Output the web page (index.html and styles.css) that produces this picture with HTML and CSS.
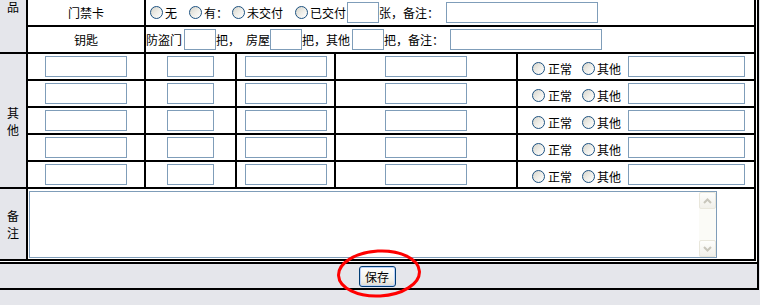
FILE: index.html
```html
<!DOCTYPE html>
<html lang="zh-CN">
<head>
    <meta charset="UTF-8">
    <title>物品交接</title>
    <link rel="stylesheet" href="styles.css">
</head>
<body>
    <div class="frame">
        <div class="main">
            <div class="sheet">
                <!-- 物品 -->
                <div class="side side-top">品</div>
                <div class="label">门禁卡</div>
                <div class="line wide-cell">
                    <input type="radio" name="card" class="radio"><span class="gap">无</span>
                    <input type="radio" name="card" class="radio"><span>有：</span>
                    <input type="radio" name="pay" class="radio"><span class="gap">未交付</span>
                    <input type="radio" name="pay" class="radio"><span>已交付</span>
                    <input class="box tiny ml1"><span>张，备注：</span>
                    <input class="box note ml7">
                </div>
                <div class="label">钥匙</div>
                <div class="line wide-cell">
                    <span>防盗门</span>
                    <input class="box tiny ml2"><span>把，</span>
                    <span class="ml6">房屋</span>
                    <input class="box tiny"><span>把，其他</span>
                    <input class="box tiny ml2"><span>把，备注：</span>
                    <input class="box note ml6">
                </div>

                <!-- 其他 -->
                <div class="side side-other">其<br>他</div>

                <div class="cell"><input class="box mid"></div>
                <div class="cell"><input class="box small"></div>
                <div class="cell"><input class="box mid"></div>
                <div class="cell"><input class="box mid"></div>
                <div class="line status">
                    <input type="radio" name="s1" class="radio"><span>正常</span>
                    <input type="radio" name="s1" class="radio second"><span>其他</span>
                    <input class="box other">
                </div>

                <div class="cell"><input class="box mid"></div>
                <div class="cell"><input class="box small"></div>
                <div class="cell"><input class="box mid"></div>
                <div class="cell"><input class="box mid"></div>
                <div class="line status">
                    <input type="radio" name="s2" class="radio"><span>正常</span>
                    <input type="radio" name="s2" class="radio second"><span>其他</span>
                    <input class="box other">
                </div>

                <div class="cell"><input class="box mid"></div>
                <div class="cell"><input class="box small"></div>
                <div class="cell"><input class="box mid"></div>
                <div class="cell"><input class="box mid"></div>
                <div class="line status">
                    <input type="radio" name="s3" class="radio"><span>正常</span>
                    <input type="radio" name="s3" class="radio second"><span>其他</span>
                    <input class="box other">
                </div>

                <div class="cell"><input class="box mid"></div>
                <div class="cell"><input class="box small"></div>
                <div class="cell"><input class="box mid"></div>
                <div class="cell"><input class="box mid"></div>
                <div class="line status">
                    <input type="radio" name="s4" class="radio"><span>正常</span>
                    <input type="radio" name="s4" class="radio second"><span>其他</span>
                    <input class="box other">
                </div>

                <div class="cell"><input class="box mid"></div>
                <div class="cell"><input class="box small"></div>
                <div class="cell"><input class="box mid"></div>
                <div class="cell"><input class="box mid"></div>
                <div class="line status">
                    <input type="radio" name="s5" class="radio"><span>正常</span>
                    <input type="radio" name="s5" class="radio second"><span>其他</span>
                    <input class="box other">
                </div>

                <!-- 备注 -->
                <div class="side">备<br>注</div>
                <div class="remark">
                    <div class="memo">
                        <textarea></textarea>
                        <div class="bar">
                            <div class="arrow">
                                <svg width="9" height="6" viewBox="0 0 9 6"><polyline points="1,5 4.5,1.5 8,5" fill="none" stroke="#c8c6bb" stroke-width="2"/></svg>
                            </div>
                            <div class="track"></div>
                            <div class="arrow">
                                <svg width="9" height="6" viewBox="0 0 9 6"><polyline points="1,1 4.5,4.5 8,1" fill="none" stroke="#c8c6bb" stroke-width="2"/></svg>
                            </div>
                        </div>
                    </div>
                </div>
            </div>
        </div>
        <div class="actions">
            <button class="save">保存</button>
        </div>
    </div>

    <!-- 红圈标注 -->
    <svg class="mark" width="90" height="54" viewBox="0 0 90 54">
        <ellipse cx="43" cy="25.5" rx="40.5" ry="22.5" fill="none" stroke="#f00" stroke-width="3" transform="rotate(-3 43 25.5)"/>
    </svg>
</body>
</html>
```

FILE: styles.css
```css
body {
    margin: 0;
    background-color: #e5e6eb;
    font-family: "Noto Sans CJK SC", "Liberation Sans", sans-serif;
    font-size: 12px;
    color: #000;
}
.frame {
    width: max-content;
    margin: -5px 0 0 -5px;
    border: 2px solid #000;
}
.main {
    background-color: #fff;
    padding: 1px;
    border-bottom: 2px solid #000;
}
.sheet {
    display: grid;
    grid-template-columns: 26px 116px 89px 97px 180px 236px;
    grid-template-rows: 25px 25px repeat(5, 25px) 70px;
    gap: 2px;
    padding: 2px;
    background-color: #000;
}
.sheet > div {
    background-color: #fff;
}
.side {
    display: flex;
    align-items: center;
    justify-content: center;
    text-align: center;
    line-height: 17px;
    background-color: #e5e6eb !important;
}
.side-top {
    grid-row: span 2;
    align-items: flex-start;
    padding-top: 1px;
    line-height: 12px;
}
.side-other {
    grid-row: span 5;
}
.label {
    display: flex;
    align-items: center;
    justify-content: center;
}
.wide-cell {
    grid-column: span 4;
}
.line {
    display: flex;
    align-items: center;
    white-space: nowrap;
}
.cell {
    display: flex;
    align-items: center;
    justify-content: center;
}
.remark {
    grid-column: span 5;
}

/* 输入框 */
.box {
    box-sizing: border-box;
    height: 21px;
    margin: 0;
    padding: 0 2px;
    border: 1px solid #7f9db9;
    background-color: #fff;
    font: inherit;
}
.tiny { width: 32px; }
.small { width: 47px; }
.mid { width: 82px; }
.note { width: 152px; }
.other { width: 117px; margin-left: 7px; }
.ml1 { margin-left: 1px; }
.ml2 { margin-left: 2px; }
.ml6 { margin-left: 6px; }
.ml7 { margin-left: 7px; }
.gap { margin-right: 8px; }

/* 单选框 (XP风格) */
.radio {
    -webkit-appearance: none;
    appearance: none;
    box-sizing: border-box;
    width: 13px;
    height: 13px;
    margin: 0 2px 0 4px;
    border: 1px solid #1c5180;
    border-radius: 50%;
    background: linear-gradient(135deg, #d6d5cc 0%, #f0efea 55%, #fff 100%);
}
.status .radio {
    margin: 4px 3px 0 14px;
}
.status .radio.second {
    margin-left: 10px;
    margin-right: 2px;
}
.status span {
    margin-top: 4px;
}

/* 备注 */
.memo {
    box-sizing: border-box;
    display: flex;
    width: 688px;
    height: 67px;
    margin: 2px 0 0 1px;
    border: 1px solid #7f9db9;
    background-color: #fff;
}
.memo textarea {
    flex: 1;
    margin: 0;
    border: none;
    outline: none;
    resize: none;
    font: inherit;
}
.bar {
    display: flex;
    flex-direction: column;
    width: 17px;
    background-color: #fbfbf7;
}
.arrow {
    box-sizing: border-box;
    display: flex;
    align-items: center;
    justify-content: center;
    height: 17px;
    border: 1px solid #e9e7dc;
    border-radius: 2px;
    background: linear-gradient(#fefefc, #f1f0ea);
}
.track {
    flex: 1;
}

/* 保存按钮 */
.actions {
    display: flex;
    align-items: center;
    justify-content: center;
    height: 24px;
    background-color: #e5e6eb;
}
.save {
    box-sizing: border-box;
    width: 37px;
    height: 21px;
    padding: 0;
    border: 1px solid #003c74;
    border-radius: 3px;
    background: linear-gradient(#fff, #f0f0ea 70%, #dcdad0);
    box-shadow: inset 0 0 0 1px #b9d1fa;
    font: inherit;
    color: #000;
}
.mark {
    position: absolute;
    left: 336px;
    top: 248px;
}
```
